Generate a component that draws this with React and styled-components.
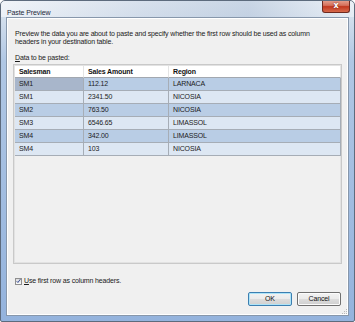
import React from 'react';
import styled, { createGlobalStyle } from 'styled-components';

const GlobalStyle = createGlobalStyle`
	body {
		margin: 0;
		background: #ffffff;
		font-family: 'Liberation Sans', Arial, sans-serif;
	}
`;

const rows = [
	{ salesman: 'SM1', amount: '112.12', region: 'LARNACA' },
	{ salesman: 'SM1', amount: '2341.50', region: 'NICOSIA' },
	{ salesman: 'SM2', amount: '763.50', region: 'NICOSIA' },
	{ salesman: 'SM3', amount: '6546.65', region: 'LIMASSOL' },
	{ salesman: 'SM4', amount: '342.00', region: 'LIMASSOL' },
	{ salesman: 'SM4', amount: '103', region: 'NICOSIA' },
];

function App() {
	return (
		<React.Fragment>
			<GlobalStyle />
			<Window>
				<TitleBar>
					<Title>Paste Preview</Title>
					<CloseButton>x</CloseButton>
				</TitleBar>
				<Client>
					<Description>
						Preview the data you are about to paste and specify whether the first row should be used as column headers in your destination table.
					</Description>
					<Label>
						<u>D</u>ata to be pasted:
					</Label>
					<GridBox>
						<Grid>
							<HeaderRow>
								<HeaderCell>Salesman</HeaderCell>
								<HeaderCell>Sales Amount</HeaderCell>
								<HeaderCell>Region</HeaderCell>
							</HeaderRow>
							{rows.map((row, i) => (
								<DataRow key={i} $dark={i % 2 === 0}>
									<Cell $current={i === 0}>{row.salesman}</Cell>
									<Cell>{row.amount}</Cell>
									<Cell>{row.region}</Cell>
								</DataRow>
							))}
						</Grid>
					</GridBox>
					<CheckRow>
						<CheckBox>
							<svg width="6" height="6" viewBox="0 0 6 6">
								<path d="M0.8 3.2 L2.3 4.8 L5.3 0.8" fill="none" stroke="#2a3f8f" strokeWidth="1.1" />
							</svg>
						</CheckBox>
						<span>
							<u>U</u>se first row as column headers.
						</span>
					</CheckRow>
					<ButtonRow>
						<Button $default>OK</Button>
						<Button>Cancel</Button>
					</ButtonRow>
					<Grip>
						<svg width="8" height="8" viewBox="0 0 8 8">
							<rect x="6" y="2" width="1" height="1" fill="#b8b8b8" />
							<rect x="4" y="4" width="1" height="1" fill="#b8b8b8" />
							<rect x="6" y="4" width="1" height="1" fill="#b8b8b8" />
							<rect x="2" y="6" width="1" height="1" fill="#b8b8b8" />
							<rect x="4" y="6" width="1" height="1" fill="#b8b8b8" />
							<rect x="6" y="6" width="1" height="1" fill="#b8b8b8" />
						</svg>
					</Grip>
				</Client>
			</Window>
		</React.Fragment>
	);
}

export default App;

const Window = styled.div`
	width: 355px;
	height: 322px;
	box-sizing: border-box;
	border: 1px solid #5d6b7d;
	border-radius: 5px 5px 2px 2px;
	background: linear-gradient(180deg, #dfe7f1 0px, #d2deec 18px, #b0c7e4 60px, #94b3dd 100%);
	display: flex;
	flex-direction: column;
	overflow: hidden;
`;

const TitleBar = styled.div`
	height: 16px;
	display: flex;
	align-items: flex-start;
	padding-left: 6px;
	background: linear-gradient(90deg, rgba(255, 255, 255, 0.55) 0%, rgba(205, 215, 230, 0.4) 40%, rgba(175, 192, 215, 0.45) 70%, rgba(255, 255, 255, 0.4) 100%);
`;

const Title = styled.span`
	font-size: 7px;
	line-height: 7px;
	letter-spacing: -0.1px;
	color: #1e2a3a;
	margin-top: 8px;
`;

const CloseButton = styled.div`
	margin-left: auto;
	margin-right: 4px;
	margin-top: -1px;
	width: 28px;
	height: 13px;
	box-sizing: border-box;
	border: 1px solid #6e2a20;
	border-top: none;
	border-radius: 0 0 3px 3px;
	background: linear-gradient(180deg, #e8a593 0%, #d4705b 45%, #c2381f 55%, #d66a4c 100%);
	color: #ffffff;
	font-family: 'DejaVu Sans', sans-serif;
	font-weight: bold;
	font-size: 8px;
	line-height: 11px;
	text-align: center;
	text-shadow: 0 0 2px #6b1a0a;
`;

const Client = styled.div`
	flex: 1;
	margin: 0 5px 5px 5px;
	border: 1px solid #8797ab;
	background: #f0f0f0;
	box-shadow: inset 0 0 0 1px #ffffff;
	display: flex;
	flex-direction: column;
	padding: 0 6px 0 6px;
	position: relative;
	font-size: 7px;
	letter-spacing: -0.15px;
	color: #1a1a1a;
`;

const Description = styled.p`
	margin: 12px 0 0 2px;
	line-height: 8px;
	width: 300px;
`;

const Label = styled.div`
	margin: 8px 0 0 2px;
	line-height: 8px;
`;

const GridBox = styled.div`
	margin-top: 2px;
	height: 200px;
	box-sizing: border-box;
	border: 1px solid #c9c9c9;
	box-shadow: inset 0 0 0 1px #e2e2e2;
	background: #f0f0f0;
	padding: 1px 1px 0 1px;
`;

const Grid = styled.div`
	display: grid;
	grid-template-columns: 69px 85px 172px;
	width: 326px;
`;

const HeaderRow = styled.div`
	display: contents;
`;

const HeaderCell = styled.div`
	background: #ffffff;
	height: 12px;
	box-sizing: border-box;
	border-right: 1px solid #e4e4e4;
	border-bottom: 1px solid #a2a8b0;
	padding-left: 4px;
	font-weight: bold;
	line-height: 11px;
	color: #111111;
`;

const DataRow = styled.div`
	display: contents;
	--row-bg: ${(p) => (p.$dark ? '#b9cde5' : '#dde7f3')};
`;

const Cell = styled.div`
	height: 13px;
	box-sizing: border-box;
	background: ${(p) => (p.$current ? '#a8b6cb' : 'var(--row-bg)')};
	border-right: 1px solid #a6adb6;
	border-bottom: 1px solid #a6adb6;
	padding-left: 4px;
	line-height: 12px;
	color: #1c1c1c;
`;

const CheckRow = styled.div`
	display: flex;
	align-items: center;
	gap: 2px;
	margin: 13px 0 0 2px;
	line-height: 8px;
`;

const CheckBox = styled.div`
	width: 7px;
	height: 7px;
	box-sizing: border-box;
	border: 1px solid #8f8f8f;
	background: linear-gradient(180deg, #dcdcdc, #fafafa);
	display: flex;
	align-items: center;
	justify-content: center;
`;

const ButtonRow = styled.div`
	display: flex;
	justify-content: flex-end;
	gap: 5px;
	margin-top: 7px;
	padding-right: 1px;
`;

const Button = styled.div`
	width: 44px;
	height: 14px;
	box-sizing: border-box;
	border: 1px solid ${(p) => (p.$default ? '#3c7fb1' : '#707070')};
	border-radius: 2px;
	box-shadow: inset 0 0 0 1px ${(p) => (p.$default ? '#aee4f8' : '#fcfcfc')};
	background: linear-gradient(180deg, #f2f2f2 0%, #ebebeb 50%, #dddddd 51%, #cfcfcf 100%);
	font-size: 7px;
	line-height: 12px;
	text-align: center;
	color: #111111;
`;

const Grip = styled.div`
	position: absolute;
	right: 0;
	bottom: 0;
	width: 8px;
	height: 8px;
	display: flex;
`;
